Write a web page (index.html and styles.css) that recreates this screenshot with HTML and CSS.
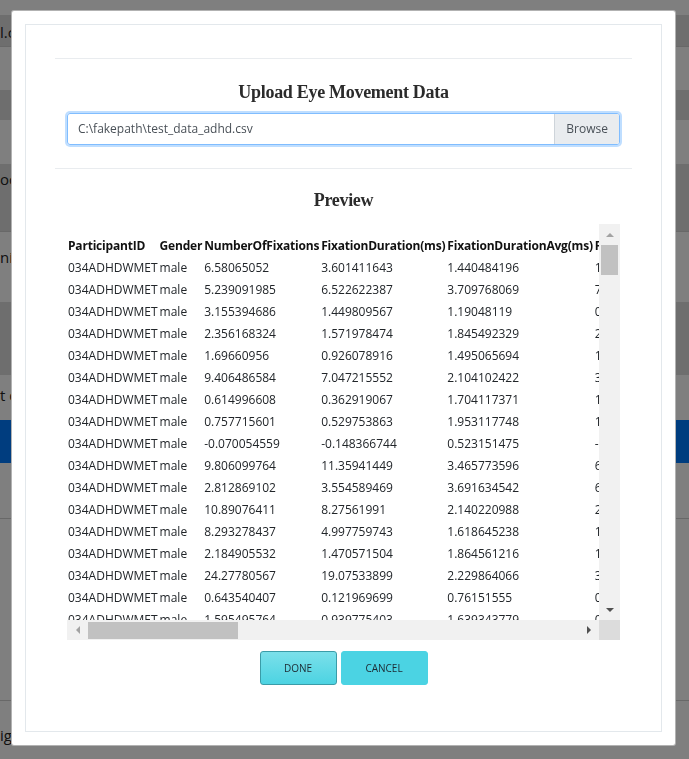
FILE: index.html
```html
<!DOCTYPE html>
<html lang="en">
<head>
<meta charset="utf-8">
<title>Upload Eye Movement Data</title>
<link rel="stylesheet" href="styles.css">
</head>
<body>
<div class="page">
  <div class="bg-row r1"></div>
  <div class="bg-row r2 tone-dark line">l.csv</div>
  <div class="bg-row r3"></div>
  <div class="bg-row r4 tone-dark"></div>
  <div class="bg-row r5"></div>
  <div class="bg-row r6 tone-dark line">oc</div>
  <div class="bg-row r7">ni</div>
  <div class="bg-row r8 tone-dark"></div>
  <div class="bg-row r9">t d</div>
  <div class="bg-row r10 tone-blue"></div>
  <div class="bg-row r11 line"></div>
  <div class="bg-row r12 line"></div>
  <div class="bg-row r13">igh</div>
</div>

<div class="backdrop"></div>

<div class="modal">
  <div class="modal-inner">
    <hr class="rule">
    <h2 class="title">Upload Eye Movement Data</h2>
    <div class="section">
      <div class="file-input">
        <span class="file-name">C:\fakepath\test_data_adhd.csv</span>
        <span class="browse">Browse</span>
      </div>
    </div>
    <hr class="rule rule-2">
    <h2 class="title preview-title">Preview</h2>
    <div class="section">
      <div class="preview-frame">
        <div class="preview-viewport">
          <table class="preview-table">
            <thead>
              <tr><th>ParticipantID</th><th>Gender</th><th>NumberOfFixations</th><th>FixationDuration(ms)</th><th>FixationDurationAvg(ms)</th><th>FixationDurationStd(ms)</th></tr>
            </thead>
            <tbody>
              <tr><td>034ADHDWMET</td><td>male</td><td>6.58065052</td><td>3.601411643</td><td>1.440484196</td><td>1.284710352</td></tr>
              <tr><td>034ADHDWMET</td><td>male</td><td>5.239091985</td><td>6.522622387</td><td>3.709768069</td><td>7.015384421</td></tr>
              <tr><td>034ADHDWMET</td><td>male</td><td>3.155394686</td><td>1.449809567</td><td>1.19048119</td><td>0.903318572</td></tr>
              <tr><td>034ADHDWMET</td><td>male</td><td>2.356168324</td><td>1.571978474</td><td>1.845492329</td><td>2.107736514</td></tr>
              <tr><td>034ADHDWMET</td><td>male</td><td>1.69660956</td><td>0.926078916</td><td>1.495065694</td><td>1.126643019</td></tr>
              <tr><td>034ADHDWMET</td><td>male</td><td>9.406486584</td><td>7.047215552</td><td>2.104102422</td><td>3.442915088</td></tr>
              <tr><td>034ADHDWMET</td><td>male</td><td>0.614996608</td><td>0.362919067</td><td>1.704117371</td><td>1.018254736</td></tr>
              <tr><td>034ADHDWMET</td><td>male</td><td>0.757715601</td><td>0.529753863</td><td>1.953117748</td><td>1.306621457</td></tr>
              <tr><td>034ADHDWMET</td><td>male</td><td>-0.070054559</td><td>-0.148366744</td><td>0.523151475</td><td>-0.102287341</td></tr>
              <tr><td>034ADHDWMET</td><td>male</td><td>9.806099764</td><td>11.35941449</td><td>3.465773596</td><td>6.218803347</td></tr>
              <tr><td>034ADHDWMET</td><td>male</td><td>2.812869102</td><td>3.554589469</td><td>3.691634542</td><td>6.804471219</td></tr>
              <tr><td>034ADHDWMET</td><td>male</td><td>10.89076411</td><td>8.27561991</td><td>2.140220988</td><td>2.635109874</td></tr>
              <tr><td>034ADHDWMET</td><td>male</td><td>8.293278437</td><td>4.997759743</td><td>1.618645238</td><td>1.930561822</td></tr>
              <tr><td>034ADHDWMET</td><td>male</td><td>2.184905532</td><td>1.470571504</td><td>1.864561216</td><td>1.547302961</td></tr>
              <tr><td>034ADHDWMET</td><td>male</td><td>24.27780567</td><td>19.07533899</td><td>2.229864066</td><td>3.719945208</td></tr>
              <tr><td>034ADHDWMET</td><td>male</td><td>0.643540407</td><td>0.121969699</td><td>0.76151555</td><td>0.514238870</td></tr>
              <tr><td>034ADHDWMET</td><td>male</td><td>1.595495764</td><td>0.939775403</td><td>1.639343779</td><td>0.827411563</td></tr>
            </tbody>
          </table>
        </div>
        <div class="vbar">
          <span class="sb-btn"><svg width="8" height="4" viewBox="0 0 8 4"><polygon points="0,4 4,0 8,4" fill="#a3a3a3"/></svg></span>
          <span class="sb-track sb-track-v"><span class="sb-thumb sb-thumb-v"></span></span>
          <span class="sb-btn"><svg width="8" height="4" viewBox="0 0 8 4"><polygon points="0,0 8,0 4,4" fill="#505050"/></svg></span>
        </div>
        <div class="hbar">
          <span class="sb-btn"><svg width="4" height="8" viewBox="0 0 4 8"><polygon points="4,0 4,8 0,4" fill="#a3a3a3"/></svg></span>
          <span class="sb-track sb-track-h"><span class="sb-thumb sb-thumb-h"></span></span>
          <span class="sb-btn"><svg width="4" height="8" viewBox="0 0 4 8"><polygon points="0,0 4,4 0,8" fill="#505050"/></svg></span>
        </div>
        <div class="sb-corner"></div>
      </div>
    </div>
    <div class="actions">
      <button class="btn btn-done" type="button">Done</button>
      <button class="btn btn-cancel" type="button">Cancel</button>
    </div>
  </div>
</div>
</body>
</html>
```

FILE: styles.css
```css
html, body {
  margin: 0;
  padding: 0;
}

body {
  font-family: "Open Sans", "Liberation Sans", sans-serif;
  background: #ffffff;
  overflow: hidden;
  height: 759px;
}

/* ---------- page behind the dialog ---------- */
.bg-row {
  box-sizing: border-box;
  font-size: 15px;
  line-height: 20px;
  color: #222222;
  white-space: nowrap;
  background: #ffffff;
}
.tone-dark { background: #dddddd; }
.tone-blue { background: #007bff; }
.line { border-bottom: 1px solid #d0d0d0; }

.r1 { height: 15px; }
.r2 { height: 32px; padding-top: 7px; }
.r3 { height: 43px; }
.r4 { height: 30px; }
.r5 { height: 44px; }
.r6 { height: 68px; padding-top: 5px; }
.r7 { height: 70px; padding-top: 15px; }
.r8 { height: 73px; }
.r9 { height: 45px; padding-top: 10px; }
.r10 { height: 43px; }
.r11 { height: 56px; }
.r12 { height: 182px; }
.r13 { height: 60px; padding-top: 24px; }

.backdrop {
  position: fixed;
  inset: 0;
  background: rgba(0, 0, 0, 0.5);
}

/* ---------- dialog ---------- */
.modal {
  position: fixed;
  left: 11px;
  top: 10px;
  width: 665px;
  height: 736px;
  box-sizing: border-box;
  background: #ffffff;
  border: 1px solid rgba(0, 0, 0, 0.3);
  border-radius: 3px;
  padding: 13px;
}

.modal-inner {
  box-sizing: border-box;
  height: 100%;
  border: 1px solid #e3e8ec;
  padding: 33px 29px 0;
}

.rule {
  border: 0;
  border-top: 1px solid #e9ecef;
  margin: 0;
  height: 0;
}

.rule-2 {
  margin-top: 23px;
}

.title {
  font-family: "Liberation Serif", "DejaVu Serif", serif;
  font-weight: 700;
  font-size: 18px;
  letter-spacing: -0.3px;
  line-height: 24px;
  text-align: center;
  color: #2b2b2b;
  margin: 21px 0 0;
}

.preview-title {
  margin-top: 19px;
}

.section {
  margin: 0 12px;
}

.file-input {
  margin-top: 9px;
  display: flex;
  height: 32px;
  box-sizing: border-box;
  border: 1px solid #80bdff;
  border-radius: 3px;
  box-shadow: 0 0 0 2px rgba(0, 123, 255, 0.25);
  overflow: hidden;
  font-size: 12px;
  color: #495057;
}

.file-name {
  flex: 1;
  padding-left: 10px;
  line-height: 30px;
  white-space: nowrap;
}

.browse {
  padding: 0 11px;
  background: #e9ecef;
  border-left: 1px solid #ced4da;
  line-height: 30px;
}

/* ---------- preview table ---------- */
.preview-frame {
  margin-top: 12px;
  height: 416px;
  display: grid;
  grid-template-columns: minmax(0, 1fr) 21px;
  grid-template-rows: minmax(0, 1fr) 20px;
}

.preview-viewport {
  overflow: hidden;
  padding-top: 11px;
  min-width: 0;
}

.preview-table {
  border-collapse: collapse;
  margin-left: 1px;
  font-size: 12px;
  color: #212529;
}

.preview-table th,
.preview-table td {
  padding: 0 1px;
  height: 22px;
  line-height: 22px;
  text-align: left;
  white-space: nowrap;
  vertical-align: middle;
}

.preview-table th:first-child,
.preview-table td:first-child {
  padding: 0 1px 0 0;
}

.preview-table th {
  font-weight: 700;
  letter-spacing: -0.2px;
  color: #111111;
}

/* drawn scrollbars */
.vbar {
  display: flex;
  flex-direction: column;
  background: #f1f1f1;
}

.hbar {
  display: flex;
  background: #f1f1f1;
}

.sb-btn {
  flex: none;
  width: 21px;
  height: 21px;
  display: flex;
  align-items: center;
  justify-content: center;
}

.hbar .sb-btn {
  height: 20px;
}

.sb-btn svg {
  display: block;
}

.sb-track {
  flex: 1;
  display: flex;
}

.sb-track-v {
  flex-direction: column;
}

.sb-thumb {
  background: #c1c1c1;
}

.sb-thumb-v {
  height: 30px;
  margin: 0 2px;
}

.sb-thumb-h {
  width: 150px;
  margin: 2px 0 1px;
}

.sb-corner {
  background: #dcdcdc;
}

/* ---------- actions ---------- */
.actions {
  margin-top: 11px;
  display: flex;
  justify-content: center;
  gap: 4px;
}

.btn {
  box-sizing: border-box;
  height: 34px;
  padding: 0;
  font-family: "Open Sans", "Liberation Sans", sans-serif;
  font-size: 10px;
  text-transform: uppercase;
  color: #1d2a33;
  border-radius: 3px;
  cursor: pointer;
}

.btn-done {
  width: 77px;
  background: linear-gradient(#7be0ea, #4cd3e2);
  border: 1px solid #3a9ca8;
}

.btn-cancel {
  width: 87px;
  background: #4bd3e3;
  border: 1px solid #4bd3e3;
}
```
